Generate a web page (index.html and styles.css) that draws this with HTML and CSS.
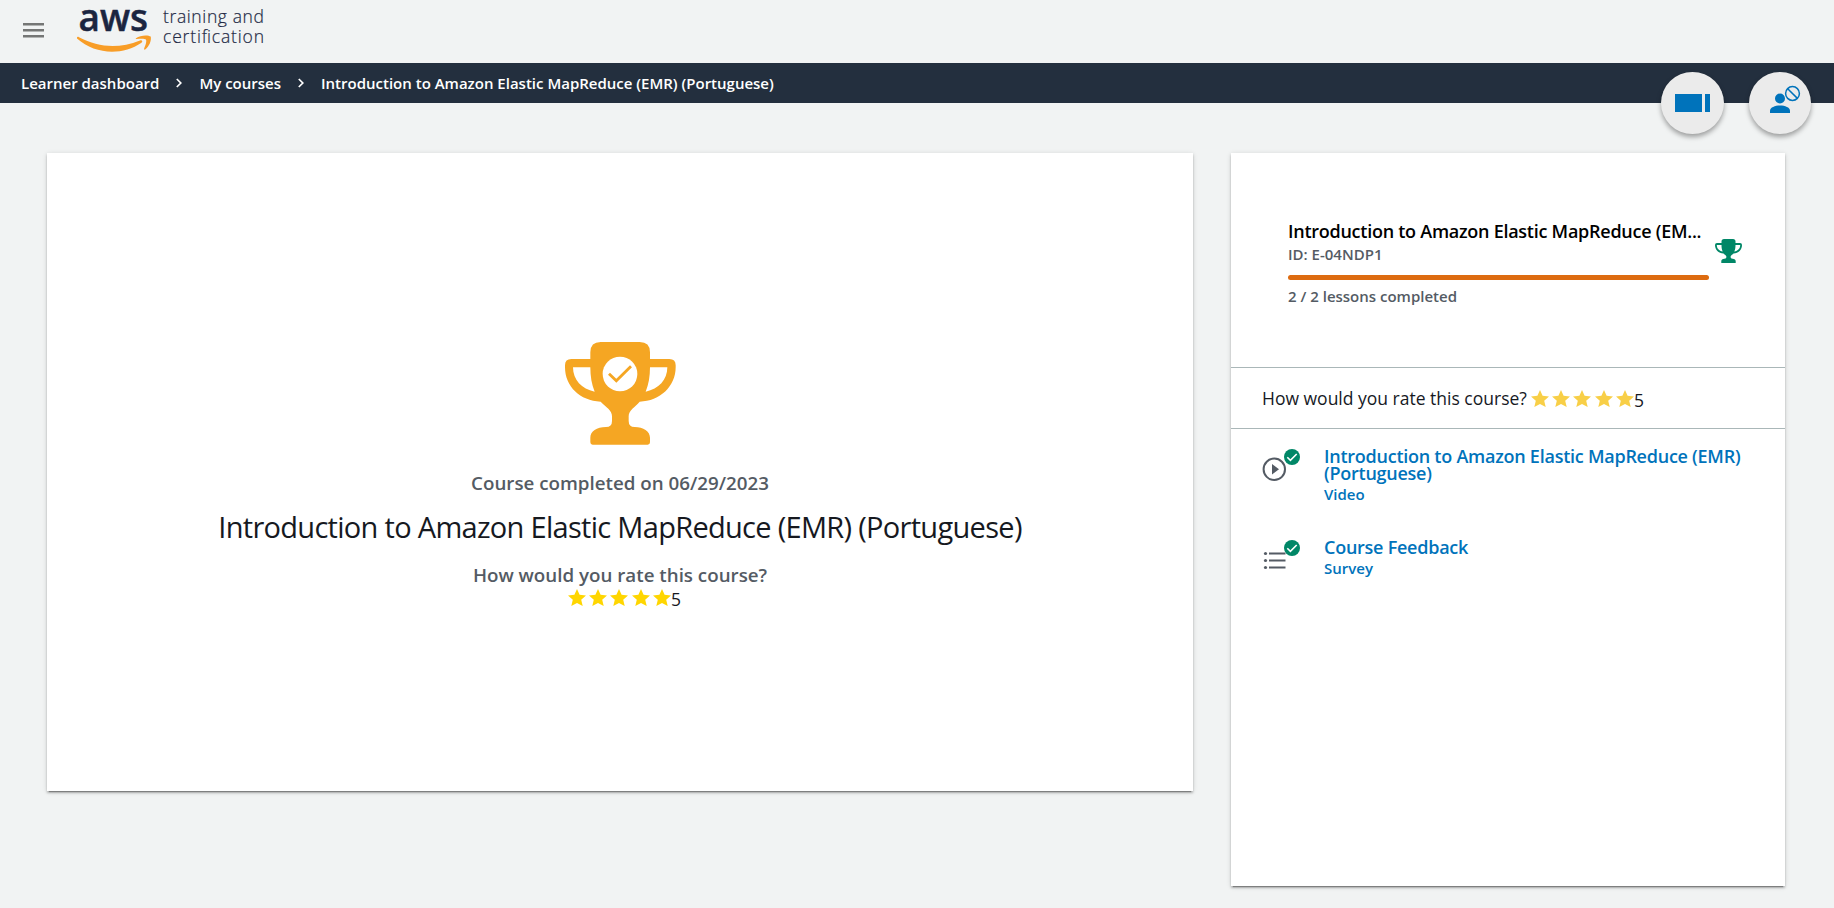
FILE: index.html
```html
<!DOCTYPE html>
<html lang="en">
<head>
<meta charset="utf-8">
<title>AWS Training and Certification</title>
<link rel="stylesheet" href="styles.css">
</head>
<body>
<svg class="defs" width="0" height="0">
  <symbol id="star" viewBox="0 0 18 17"><path d="M9 0l2.6 5.700 6.400.700-4.800 4.300 1.500 6.300L9 13.900 3.300 17l1.500-6.300L0 6.400l6.400-.700z"/></symbol>
  <symbol id="done" viewBox="0 0 16 16"><circle cx="8" cy="8" r="8" fill="#018767"/><path d="M3.300 8.300l3.100 3.100 6.300-6.400" fill="none" stroke="#fff" stroke-width="1.600"/></symbol>
</svg>
<header class="header">
  <svg class="menu" viewBox="0 0 21 15"><path d="M0 1.300h21M0 7.300h21M0 13.300h21" stroke="#757675" stroke-width="2.400"/></svg>
  <svg class="logo" viewBox="0 0 190 48">
    <text x="1.500" y="26" class="logo-aws" textLength="69.500" lengthAdjust="spacingAndGlyphs">aws</text>
    <path d="M0 32.500c.3-.8 1-.8 2-.2 20 10.500 40 11.500 61 3.200 2-.7 3.200.8 1.500 2.200C45 51 18 49.500 0 33.500z" fill="#f89d27"/>
    <path d="M59 33.200c4.500-3.500 12.500-3.300 14.700-1.700 1 4-1.500 10-5.500 13-.8.400-1.400 0-1.100-.7 1.400-3.500 2.900-7.600 1.800-9.200-1.300-1.300-5.700-.8-9.300-.6-.8 0-1.200-.3-.6-.8z" fill="#f89d27"/>
    <text x="86" y="18" class="logo-sub" textLength="101">training and</text>
    <text x="86" y="37.500" class="logo-sub" textLength="101">certification</text>
  </svg>
</header>
<nav class="crumbs">
  <span>Learner dashboard</span>
  <svg class="chev" viewBox="0 0 6 10"><path d="M.8 1l4 4-4 4" fill="none" stroke="#fff" stroke-width="1.700"/></svg>
  <span>My courses</span>
  <svg class="chev" viewBox="0 0 6 10"><path d="M.8 1l4 4-4 4" fill="none" stroke="#fff" stroke-width="1.700"/></svg>
  <span>Introduction to Amazon Elastic MapReduce (EMR) (Portuguese)</span>
</nav>
<div class="fabs">
  <button class="fab" aria-label="Toggle panel"><svg viewBox="0 0 63 63"><path d="M14 22h27v18H14zM44 22h5v18h-5z" fill="#0073bb"/></svg></button>
  <button class="fab small" aria-label="Instructor unavailable"><svg viewBox="0 0 63 63"><g fill="#0073bb"><circle cx="31" cy="26.500" r="5"/><path d="M21 41v-2.500c0-3 5-5 10-5s10 2 10 5V41z"/></g><circle cx="43.500" cy="21.500" r="8.200" fill="#ebebeb"/><g fill="none" stroke="#0073bb" stroke-width="1.500"><circle cx="43.500" cy="21.500" r="6.900"/><path d="M38.700 16.700l9.700 9.700"/></g></svg></button>
</div>
<main class="main">
  <section class="card summary">
    <svg class="trophy" viewBox="75 67 333 309"><path fill="#f5a623" fill-rule="evenodd" d="M151 98Q151 67 182 67H299Q330 67 330 98V118H388Q407 118 407 137V143C407 200 360 245 299 246C285 262 266 272 266 290V304Q266 322 284 322C310 322 330 335 330 354V368Q330 375 323 375H158Q151 375 151 368V354C151 335 170 322 198 322Q216 322 216 304V290C216 272 198 262 182 246C120 244 75 200 75 143V137Q75 118 94 118H151ZM99 143H151C151 170 155 195 164 216C125 209 99 180 99 143ZM382 143H330C330 170 326 195 317 216C356 209 382 180 382 143Z"/><circle cx="240" cy="163" r="52" fill="#fff"/><path d="M207 162l22 21 44-43" fill="none" stroke="#f5a623" stroke-width="8.500"/></svg>
    <p class="note n1">Course completed on 06/29/2023</p>
    <h1 class="title">Introduction to Amazon Elastic MapReduce (EMR) (Portuguese)</h1>
    <p class="note n2">How would you rate this course?</p>
    <div class="stars gold"><svg><use href="#star"/></svg><svg><use href="#star"/></svg><svg><use href="#star"/></svg><svg><use href="#star"/></svg><svg><use href="#star"/></svg><span>5</span></div>
  </section>
  <aside class="card panel">
    <div class="head">
      <div class="info">
        <h2 class="name">Introduction to Amazon Elastic MapReduce (EM...</h2>
        <p class="meta id">ID: E-04NDP1</p>
        <div class="bar"></div>
        <p class="meta">2 / 2 lessons completed</p>
      </div>
      <svg class="cup" viewBox="0 0 27 24"><path fill="#018767" fill-rule="evenodd" d="M6.500 2.500Q6.500 0 9 0h9q2.500 0 2.500 2.500V4H25q2 0 2 2c0 5-3.500 8-8.500 8.600-1.200 1.300-2.900 1.800-2.900 3.200 0 1.300.5 2 2 2 2 0 3.100 1 3.100 2.500V24H6.300v-1.700c0-1.500 1.100-2.500 3.100-2.500 1.500 0 2-.7 2-2 0-1.400-1.700-1.900-2.900-3.200C3.500 14 0 11 0 6q0-2 2-2h4.500zM1.800 6h4.700c0 2.500.3 4.700 1.200 6.500C4 11.700 1.800 9.500 1.800 6zM25.200 6h-4.700c0 2.500-.3 4.700-1.200 6.500 3.700-.8 5.900-3 5.900-6.500z"/></svg>
    </div>
    <div class="rate"><span class="question">How would you rate this course?</span>
      <div class="stars amber"><svg><use href="#star"/></svg><svg><use href="#star"/></svg><svg><use href="#star"/></svg><svg><use href="#star"/></svg><svg><use href="#star"/></svg><span>5</span></div>
    </div>
    <ul class="lessons-list">
      <li class="item">
        <svg class="icon" viewBox="0 0 38 34"><circle cx="12.300" cy="21.300" r="10.700" fill="none" stroke="#545b64" stroke-width="2"/><path d="M10 16v10.500l7-5.200z" fill="#545b64"/><use href="#done" x="22" y="1" width="16" height="16"/></svg>
        <div class="text"><a class="link">Introduction to Amazon Elastic MapReduce (EMR)<br>(Portuguese)</a><span class="kind">Video</span></div>
      </li>
      <li class="item">
        <svg class="icon" viewBox="0 0 38 34"><g stroke="#545b64" stroke-width="2"><path d="M7 14.500h16.500M7 21.500h16.500M7 28.500h16.500"/></g><g fill="#545b64"><circle cx="3.500" cy="14.500" r="1.600"/><circle cx="3.500" cy="21.500" r="1.600"/><circle cx="3.500" cy="28.500" r="1.600"/></g><use href="#done" x="22" y="1" width="16" height="16"/></svg>
        <div class="text"><a class="link">Course Feedback</a><span class="kind">Survey</span></div>
      </li>
    </ul>
  </aside>
</main>
</body>
</html>
```
FILE: styles.css
```css
* { box-sizing: border-box; }
body { margin: 0; height: 908px; overflow: hidden; background: #f1f3f3; font-family: "Open Sans", sans-serif; color: #16191f; }
h1, h2, p, ul { margin: 0; padding: 0; }
svg { display: block; flex: none; }
.defs { position: absolute; }
.header { height: 63px; display: flex; align-items: flex-start; padding-left: 23px; }
.menu { width: 21px; height: 15px; margin-top: 23px; }
.logo { width: 190px; height: 48px; margin: 5px 0 0 33px; overflow: visible; }
.logo-aws { font-size: 38px; font-weight: 600; fill: #1b2540; stroke: #1b2540; stroke-width: .5px; }
.logo-sub { font-size: 17.500px; font-weight: 300; fill: #232a45; stroke: #232a45; stroke-width: .2px; }
.crumbs { height: 40px; display: flex; align-items: center; padding-left: 21px; background: #232f3e; color: #fff; font-size: 15px; font-weight: 600; white-space: nowrap; }
.chev { width: 6px; height: 10px; margin: 0 17px 0 17px; }
.fabs { position: absolute; top: 72px; right: 23px; display: flex; gap: 25px; }
.fab { width: 63px; height: 62px; padding: 0; border: 0; border-radius: 50%; background: #ebebeb; box-shadow: 0 3px 5px rgba(0,0,0,.35); }
.fab svg { width: 63px; height: 63px; }
.fab.small { width: 62px; }
.main { display: flex; align-items: flex-start; gap: 38px; padding: 50px 0 0 47px; }
.card { background: #fff; box-shadow: 0 3px 1px -2px rgba(0,0,0,.3), 0 2px 2px rgba(0,0,0,.2), 0 1px 5px rgba(0,0,0,.14); }
.summary { width: 1146px; height: 638px; padding-top: 189px; display: flex; flex-direction: column; align-items: center; white-space: nowrap; }
.trophy { width: 111px; height: 103px; }
.note { font-size: 18.750px; line-height: 24px; font-weight: 600; color: #545b64; }
.n1 { margin-top: 26px; }
.title { margin-top: 12px; font-size: 29px; line-height: 40px; font-weight: 400; letter-spacing: -.7px; }
.n2 { margin-top: 16px; }
.stars { display: flex; gap: 3.200px; }
.stars svg { width: 18px; height: 17px; }
.stars span { margin-left: -3px; font-size: 17.500px; line-height: 20px; }
.gold { margin: 2px 0 0 9px; fill: #ffd600; }
.amber { fill: #f8cf47; }
.panel { width: 554px; height: 733px; }
.head { height: 214px; display: flex; padding: 66px 0 0 57px; white-space: nowrap; }
.info { width: 421px; }
.name { font-size: 18px; line-height: 24px; font-weight: 600; letter-spacing: -.26px; color: #000; }
.meta { font-size: 15px; line-height: 20px; font-weight: 600; color: #545b64; }
.id { margin-top: 1px; }
.bar { margin: 11px 0 6px; height: 5px; border-radius: 3px; background: #dd6b10; }
.cup { width: 27px; height: 24px; margin: 20px 0 0 6px; }
.rate { height: 62px; display: flex; padding: 18px 0 0 31px; border-top: 1px solid #aab7b8; border-bottom: 1px solid #aab7b8; white-space: nowrap; }
.question { width: 269px; font-size: 17.500px; line-height: 24px; }
.amber svg { margin-top: 4px; }
.amber span { margin-top: 4px; }
.lessons-list { list-style: none; padding: 19px 0 0 31px; display: flex; flex-direction: column; gap: 34px; }
.item { display: flex; gap: 24px; white-space: nowrap; }
.icon { width: 38px; height: 34px; }
.text { display: flex; flex-direction: column; }
.link { font-size: 18px; line-height: 17px; font-weight: 600; letter-spacing: -.25px; color: #0073bb; }
.kind { margin-top: 2px; font-size: 15px; line-height: 21px; font-weight: 600; color: #0073bb; }
```
